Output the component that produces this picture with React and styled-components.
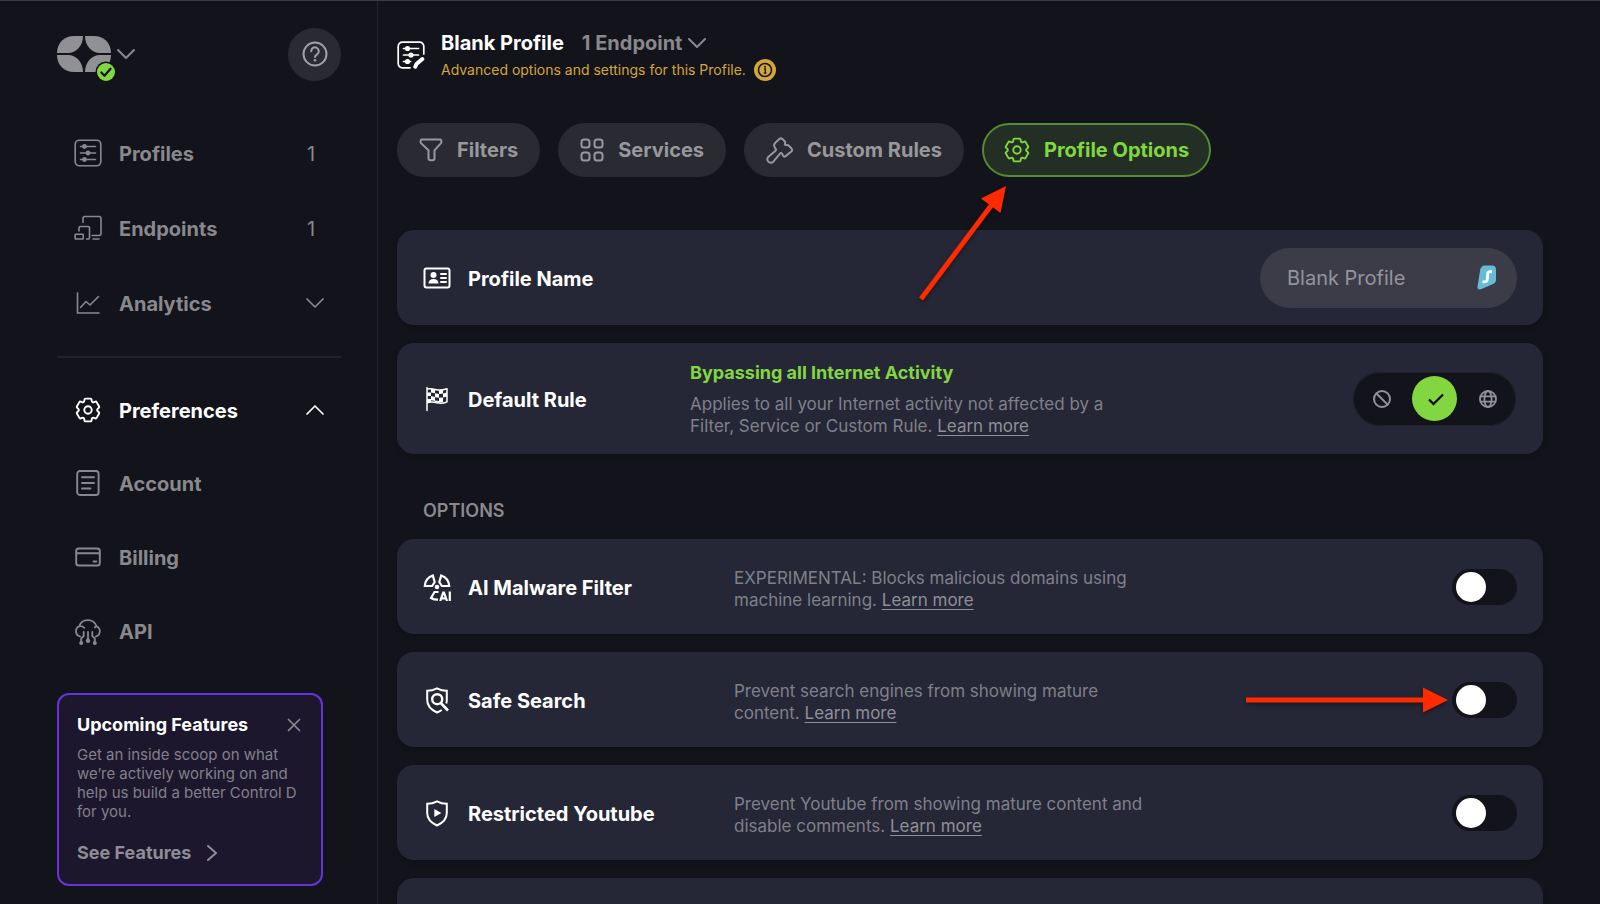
import React from "react";
import styled, { createGlobalStyle, css } from "styled-components";

const color = {
  page: "#13131b",
  card: "#262736",
  pill: "#2a2a32",
  field: "#3c3c49",
  line: "#22222b",
  muted: "#89898d",
  soft: "#7f8089",
  green: "#82d740",
  gold: "#d3a63b",
  purple: "#6434dc",
  arrow: "#ff2b00",
};

const GlobalStyle = createGlobalStyle`
  *, *::before, *::after { box-sizing: border-box; }
  body {
    margin: 0;
    background: ${color.page};
    color: #fff;
    font-family: Inter, "Open Sans", "Liberation Sans", sans-serif;
  }
  button { font: inherit; color: inherit; background: none; border: 0; padding: 0; cursor: pointer; }
  h1, h2, p, ul { margin: 0; padding: 0; }
  svg { display: block; flex: none; }
`;

/* ---------- icons ---------- */

const Svg = ({ w = 28, h = w, sw = 2, children, ...rest }) => (
  <svg
    width={w}
    height={h}
    viewBox={`0 0 ${w} ${h}`}
    fill="none"
    stroke="currentColor"
    strokeWidth={sw}
    strokeLinecap="round"
    strokeLinejoin="round"
    aria-hidden="true"
    {...rest}
  >
    {children}
  </svg>
);

const Sliders = () => (
  <>
    <path d="M6.5 7.5h15M6.5 14h15M6.5 20.5h15" />
    <g fill="currentColor" stroke="none">
      <circle cx="10.5" cy="7.5" r="2.4" />
      <circle cx="14" cy="14" r="2.4" />
      <circle cx="10.5" cy="20.5" r="2.4" />
    </g>
  </>
);

const ProfilesIcon = () => (
  <Svg sw={1.6}>
    <rect x="1.2" y="1.2" width="25.6" height="25.6" rx="4.2" />
    <Sliders />
  </Svg>
);

const ProfileEditIcon = () => (
  <Svg sw={1.7}>
    <path d="M13 26.8H5.4a4.2 4.2 0 0 1-4.2-4.2V5.4a4.2 4.2 0 0 1 4.2-4.2h17.2a4.2 4.2 0 0 1 4.2 4.2V13" />
    <path d="M6.5 7.5h15M6.5 14h15M6.5 20.5h7" />
    <g fill="currentColor" stroke="none">
      <circle cx="10.5" cy="7.5" r="2.6" />
      <circle cx="14" cy="14" r="2.6" />
      <circle cx="10.5" cy="20.5" r="2.6" />
    </g>
    <path d="M18.3 25.7l1.2-2.7 5.8-5" strokeWidth="4" />
  </Svg>
);

const EndpointsIcon = () => (
  <Svg sw={1.6}>
    <path d="M9 8.5V4.5a2 2 0 0 1 2-2h14a2 2 0 0 1 2 2v15a2 2 0 0 1-2 2h-7M19 25h6" />
    <path d="M5 17v-3a1.5 1.5 0 0 1 1.5-1.5h7.5a1.5 1.5 0 0 1 1.5 1.5v9.5a1.5 1.5 0 0 1-1.5 1.5h-1.5" />
    <rect x="1.2" y="20.2" width="8" height="4.8" rx=".6" />
  </Svg>
);

const AnalyticsIcon = () => (
  <Svg sw={1.6}>
    <path d="M3.5 4v20H25M6.5 18.5l5.5-6 4 3.5 8.5-8.5" strokeLinejoin="miter" />
  </Svg>
);

/* Outline of a six-toothed wheel centred on (13, 13), with softened corners */
const gearPath = (() => {
  const points = [];
  for (let i = 0; i < 6; i += 1) {
    const a = ((i * 60 - 90) * Math.PI) / 180;
    [[8.3, -3.9], [11.4, -3.4], [11.4, 3.4], [8.3, 3.9]].forEach(([r, t]) => {
      points.push([13 + r * Math.cos(a) - t * Math.sin(a), 13 + r * Math.sin(a) + t * Math.cos(a)]);
    });
  }
  const toward = (p, q, d) => {
    const len = Math.hypot(q[0] - p[0], q[1] - p[1]);
    const k = Math.min(d / len, 0.5);
    return `${(p[0] + (q[0] - p[0]) * k).toFixed(2)} ${(p[1] + (q[1] - p[1]) * k).toFixed(2)}`;
  };
  const n = points.length;
  const parts = points.map((p, i) => {
    const before = toward(p, points[(i + n - 1) % n], 0.9);
    const after = toward(p, points[(i + 1) % n], 0.9);
    return `${i ? "L" : "M"}${before}Q${p[0].toFixed(2)} ${p[1].toFixed(2)} ${after}`;
  });
  return `${parts.join("")}Z`;
})();

const GearIcon = () => (
  <Svg w={26} sw={1.9}>
    <path d={gearPath} />
    <circle cx="13" cy="13" r="3.7" />
  </Svg>
);

const AccountIcon = () => (
  <Svg sw={1.9}>
    <rect x="3.2" y="2" width="21.4" height="24" rx="2.8" />
    <path d="M8 8.3h12M8 14h12M8 19.5h8.5" />
  </Svg>
);

const BillingIcon = () => (
  <Svg sw={1.9}>
    <rect x="2.2" y="5.5" width="23.6" height="17" rx="2.6" />
    <path d="M2.5 10.3h23M19.5 18.5h2.8" />
  </Svg>
);

const ApiIcon = () => (
  <Svg sw={1.8}>
    <path d="M6 19.5A5.5 5.5 0 0 1 5.2 9.2 9.2 9.2 0 0 1 22.5 9.2a5.5 5.5 0 0 1-.6 10.3M5 9.3c2-.5 3.8 0 5.3 1.5M22.7 9.5l-2 .8" />
    <path d="M14 15v8M9.7 15v4l-2.5 2.3v3.5M18.3 15v4l2.5 2.3v3.5" />
    <g fill="currentColor" stroke="none">
      <circle cx="14" cy="23.8" r="2.2" />
      <circle cx="7.2" cy="26" r="2" />
      <circle cx="20.8" cy="26" r="2" />
    </g>
  </Svg>
);

const HelpIcon = () => (
  <Svg w={26} sw={2}>
    <circle cx="13" cy="13" r="11.5" />
    <path d="M9.2 10.2a3.8 3.8 0 1 1 5.9 3.1c-1.3.8-2.1 1.4-2.1 2.8" />
    <circle cx="13" cy="19.3" r="1.3" fill="currentColor" stroke="none" />
  </Svg>
);

const Chevron = ({ up, w = 18, sw = 1.7 }) => (
  <Svg w={w} h={12} sw={sw}>
    <path d={up ? `M1 10L${w / 2} 2L${w - 1} 10` : `M1 2L${w / 2} 10L${w - 1} 2`} />
  </Svg>
);

const FilterIcon = () => (
  <Svg w={24} sw={2}>
    <path d="M2.8 1.5h18.4c1.3 0 1.6 2.7.8 3.6l-6.5 7.2v8a2 2 0 0 1-2 2h-2a2 2 0 0 1-2-2v-8L2 5.1c-.8-.9-.5-3.6.8-3.6z" />
  </Svg>
);

const ServicesIcon = () => (
  <Svg w={24} sw={2}>
    <rect x="1.5" y="1.5" width="8" height="8" rx="2.5" />
    <rect x="14.5" y="1.5" width="8" height="8" rx="2.5" />
    <rect x="1.5" y="14.5" width="8" height="8" rx="2.5" />
    <rect x="14.5" y="14.5" width="8" height="8" rx="2.5" />
  </Svg>
);

const RulesIcon = () => (
  <Svg w={27} sw={1.9} viewBox="1 0 26 26">
    <path d="M10 5.5l3.8-3.5a2.2 2.2 0 0 1 3 0l2.200 2.100a2 2 0 0 1 .3 2.200c-.4 1 .4 1.800 1.300 1.500a2.500 2.500 0 0 1 2.500.6l2.400 2.700a2 2 0 0 1-.1 2.900l-5.500 4.400c-1 .8-2.200.4-2.700-.7l-.6-1.400c-.5-1-1.500-1.100-2.200-.2L8.300 23.400a3.300 3.300 0 0 1-5.100.3 3.300 3.300 0 0 1 .5-5l6.200-5.200c.9-.8 1-1.400.3-2.300l-.5-.7c-1.200-1.700-1.200-3.500.3-5z" />
  </Svg>
);

const IdCardIcon = () => (
  <Svg w={28} sw={2}>
    <rect x="1.5" y="4.5" width="25" height="19" rx="2" />
    <path d="M18 10h5M18 14h5M18 18h5" />
    <g fill="currentColor" stroke="none">
      <circle cx="10.5" cy="11" r="3" />
      <path d="M5.5 19.5c0-3 2-4.5 5-4.5s5 1.5 5 4.5z" />
    </g>
  </Svg>
);

const FlagIcon = () => (
  <Svg sw={1.5}>
    <path d="M4 2.5v23M4 4c4-1 7 .2 10 .8s6 .2 10-1v13c-4 2-7 1.7-10 1s-6-1.3-10 0" />
    <path
      d="M8 3.7l4 .7v3.8l-4-.7zM16 5l4-.4v3.9l-4 .4zM4 7.5h4v3.6H4zM12 8.2l4 .7v3.9l-4-.6zM20 8.5l4-1v4l-4 1zM8 11.1l4 .9v4l-4-.7zM16 12.8l4-.4v4.5l-4 .8zM12 15.5l4 .6v2l-4-.4zM4 14h4v3.5H4z"
      fill="currentColor"
      stroke="none"
    />
  </Svg>
);

const MalwareIcon = () => (
  <Svg sw={2.2} strokeLinejoin="miter" strokeLinecap="butt">
    <path d="M9.8 2.5A12 12 0 0 0 1.8 13h7.3l2.6-4z" />
    <path d="M18.2 2.5a12 12 0 0 1 8 10.5h-7.3l-2.6-4z" />
    <path d="M15.5 19h-4L8 25c2 1.2 4 1.7 7 1.7" />
    <circle cx="14" cy="14" r="2.3" fill="currentColor" stroke="none" />
    <path d="M17.2 28l3-8.3h.8l3 8.3M18.4 25.4h4.4M26.8 18.6V28" />
  </Svg>
);

const SafeSearchIcon = () => (
  <Svg sw={2} strokeLinejoin="miter" strokeLinecap="butt">
    <path d="M18.8 24c-1.5 1-3 1.8-4.8 2.5C7.5 23.5 4.2 20 4.2 14V4.8C8 4.8 11 4 14 2.4c3 1.6 6 2.4 9.8 2.4V14c0 1.2-.1 2.5-.5 3.5" />
    <circle cx="14.2" cy="13.2" r="5" strokeWidth="2.4" />
    <path d="M17.8 17l7.2 7.5" strokeWidth="2.6" />
  </Svg>
);

const RestrictedIcon = () => (
  <Svg sw={2} strokeLinejoin="miter">
    <path d="M14 26.5C7.5 23.5 4.2 20 4.2 14V4.8C8 4.8 11 4 14 2.4c3 1.6 6 2.4 9.8 2.4V14c0 6-3.3 9.5-9.8 12.5z" />
    <path d="M11.3 10v8l7-4z" fill="currentColor" stroke="none" />
  </Svg>
);

const BanIcon = () => (
  <Svg w={20} sw={2}>
    <circle cx="10" cy="10" r="8" />
    <path d="M4.5 4.5l11 11" />
  </Svg>
);

const CheckIcon = () => (
  <Svg w={20} sw={2.2} strokeLinecap="butt" strokeLinejoin="miter">
    <path d="M4 10.5l4.5 4.5L18 5.5" />
  </Svg>
);

const GlobeIcon = () => (
  <Svg w={20} sw={1.8}>
    <circle cx="10" cy="10" r="8" />
    <ellipse cx="10" cy="10" rx="3.6" ry="8" />
    <path d="M2.5 7.3h15M2.5 12.7h15" />
  </Svg>
);

const InfoIcon = () => (
  <svg width="22" height="22" viewBox="0 0 22 22" aria-hidden="true">
    <circle cx="11" cy="11" r="11" fill={color.gold} />
    <circle cx="11" cy="11" r="6.5" fill="none" stroke={color.page} strokeWidth="1.5" />
    <circle cx="11" cy="7.8" r="1" fill={color.page} />
    <path d="M10 10h1.3v4M9.7 14.2h2.8" stroke={color.page} strokeWidth="1.3" fill="none" />
  </svg>
);

const LogoIcon = () => (
  <svg width="60" height="56" viewBox="0 -10 60 56" aria-hidden="true">
    <g fill="#919195">
      <path d="M26 0H17C7 0 0 7 0 17H11C19 17 26 10 26 0Z" />
      <path d="M28 0h9c10 0 17 7 17 17H43C35 17 28 10 28 0Z" />
      <path d="M26 36H17C7 36 0 29 0 19H11C19 19 26 26 26 36Z" />
      <path d="M28 36h9c10 0 17-7 17-17H43C35 19 28 26 28 36Z" />
    </g>
    <circle cx="49" cy="36" r="10.5" fill={color.page} />
    <circle cx="49" cy="36" r="9" fill={color.green} />
    <path d="M44.3 36.5l3.2 3.2 6-7" fill="none" stroke={color.page} strokeWidth="2.2" strokeLinecap="round" strokeLinejoin="round" />
  </svg>
);

const SharkIcon = () => (
  <svg width="20" height="25" viewBox="0 0 20 25" aria-hidden="true">
    <path d="M8.5.5H15a4 4 0 0 1 4 4v10c0 2-1 3.5-3 4.5L4.5 24C2 25 .2 24 .5 21.5L3 6C3.5 2.5 5 .5 8.5.5z" fill="#66bcd5" />
    <path d="M15 6.8c-3.5-.7-4.5.6-4.500 3.200v3c0 2.800-1.200 4.400-5 3.600" fill="none" stroke="#fff" strokeWidth="2.8" />
  </svg>
);

const CloseIcon = () => (
  <Svg w={14} sw={1.7}>
    <path d="M1.5 1.5l11 11M12.5 1.5l-11 11" />
  </Svg>
);

/* ---------- layout ---------- */

const Shell = styled.div`
  display: grid;
  grid-template-columns: 378px minmax(0, 1fr);
  height: 100vh;
  overflow: hidden;
  border-top: 1px solid #3b3d3c;
`;

const Sidebar = styled.aside`
  padding: 0 36px 0 57px;
  border-right: 1px solid ${color.line};
`;

const Brand = styled.div`
  display: flex;
  align-items: center;
  justify-content: space-between;
  height: 114px;
  padding-bottom: 8px;
`;

const BrandButton = styled.button`
  display: flex;
  align-items: center;
  color: ${color.muted};
`;

const HelpButton = styled.button`
  display: grid;
  place-items: center;
  width: 53px;
  height: 53px;
  border-radius: 50%;
  background: ${color.pill};
  color: #a1a1a4;
`;

const NavList = styled.ul`
  list-style: none;
`;

const NavLink = styled.a`
  display: grid;
  grid-template-columns: 28px 1fr 26px;
  column-gap: 17px;
  align-items: center;
  height: ${(p) => p.$height || 75}px;
  padding: 0 13px 0 17px;
  color: ${(p) => (p.$active ? "#fff" : color.muted)};
  font-size: 20px;
  font-weight: 700;
  text-decoration: none;

  svg { justify-self: center; }
`;

const Label = styled.span`
  padding-top: 2px;
`;

const Count = styled.span`
  padding: 2px 8px 0 0;
  text-align: center;
  font-weight: 400;
`;

const Divider = styled.hr`
  height: 2px;
  margin: 16px 0;
  border: 0;
  background: ${color.line};
`;

const Promo = styled.section`
  margin: 25px 18px 0 0;
  padding: 18px 17px 19px 18px;
  border: 2px solid ${color.purple};
  border-radius: 12px;
  background: #1c172d;
`;

const PromoHead = styled.div`
  display: flex;
  align-items: center;
  justify-content: space-between;
  padding-right: 3px;
  color: ${color.muted};
`;

const PromoTitle = styled.h2`
  color: #fff;
  font-size: 18px;
  line-height: 24px;
  font-weight: 700;
`;

const PromoText = styled.p`
  margin-top: 8px;
  color: #82808b;
  font-size: 15px;
  line-height: 19px;
`;

const PromoLink = styled.a`
  display: flex;
  align-items: center;
  gap: 13px;
  margin-top: 20px;
  color: #8e8c96;
  font-size: 18px;
  line-height: 24px;
  font-weight: 700;
  text-decoration: none;

  svg { transform: rotate(-90deg); }
`;

const Main = styled.main`
  padding: 27px 57px 0 19px;
  overflow-y: auto;
  scrollbar-width: none;
`;

const PageHead = styled.header`
  display: flex;
  align-items: center;
  gap: 16px;
`;

const TitleLine = styled.div`
  display: flex;
  align-items: center;
  gap: 18px;
  line-height: 30px;
`;

const Title = styled.h1`
  font-size: 20px;
  font-weight: 700;
`;

const EndpointButton = styled.button`
  display: flex;
  align-items: center;
  gap: 6px;
  color: ${color.muted};
  font-size: 20px;
  font-weight: 700;
`;

const Subtitle = styled.p`
  display: flex;
  align-items: center;
  gap: 8px;
  color: ${color.gold};
  font-size: 14px;
  line-height: 24px;
`;

const Tabs = styled.nav`
  display: flex;
  gap: 18px;
  margin-top: 41px;
`;

const Tab = styled.button`
  position: relative;
  display: flex;
  align-items: center;
  gap: 14px;
  height: 54px;
  padding: 0 20px;
  border: 2px solid ${color.pill};
  border-radius: 27px;
  background: ${color.pill};
  color: #98989c;
  font-size: 20px;
  font-weight: 700;
  white-space: nowrap;

  ${(p) =>
    p.$active &&
    css`
      border-color: #558b34;
      background: #232f24;
      color: ${color.green};
    `}
`;

const CardList = styled.div`
  display: grid;
  gap: 18px;
  margin-top: ${(p) => p.$top || 0}px;
`;

const Card = styled.section`
  display: grid;
  grid-template-columns: 28px ${(p) => p.$label || 249}px minmax(0, 425px) 1fr;
  column-gap: 17px;
  align-items: center;
  min-height: ${(p) => p.$height || 95}px;
  padding: 0 26px;
  border-radius: 17px;
  background: ${color.card};
  box-shadow: 0 2px 4px rgba(0, 0, 0, 0.2);
`;

const CardTitle = styled.h2`
  padding-top: 2px;
  font-size: 20px;
  line-height: 26px;
  font-weight: 700;
  white-space: nowrap;
`;

const CardEnd = styled.div`
  grid-column: 4;
  justify-self: end;
  position: relative;
`;

const RuleInfo = styled.div`
  display: grid;
  gap: 2px;
`;

const Status = styled.p`
  color: ${color.green};
  font-size: 18px;
  line-height: 26px;
  font-weight: 700;
`;

const Description = styled.p`
  padding-top: 5px;
  color: ${color.soft};
  font-size: 17px;
  line-height: 22px;

  a { color: #8e8f97; text-underline-offset: 3px; }
`;

const NameField = styled.div`
  display: flex;
  align-items: center;
  width: 257px;
  height: 60px;
  padding: 0 20px 0 27px;
  border-radius: 30px;
  background: ${color.field};
`;

const NameInput = styled.input`
  flex: 1;
  min-width: 0;
  padding: 0;
  border: 0;
  outline: 0;
  background: none;
  color: #94949b;
  font: inherit;
  font-size: 20px;
`;

const RuleSwitch = styled.fieldset`
  display: flex;
  align-items: center;
  justify-content: space-between;
  width: 163px;
  height: 54px;
  margin: 0 1px 0 0;
  padding: 0 5px;
  border: 1px solid #202028;
  border-radius: 27px;
  background: ${color.page};
`;

const RuleOption = styled.label`
  position: relative;
  display: grid;
  place-items: center;
  width: 45px;
  height: 45px;
  border-radius: 50%;
  color: #929296;
  cursor: pointer;

  &:has(input:checked) { background: ${color.green}; color: #000; }
`;

const RuleInput = styled.input`
  position: absolute;
  inset: 0;
  margin: 0;
  opacity: 0;
`;

const Toggle = styled.input`
  appearance: none;
  display: block;
  width: 65px;
  height: 36px;
  margin: 0;
  padding: 3px 4px;
  border-radius: 18px;
  background: ${color.page};
  cursor: pointer;

  &::before {
    content: "";
    display: block;
    width: 30px;
    height: 30px;
    border-radius: 50%;
    background: #fff;
  }
  &:checked { background: ${color.green}; }
  &:checked::before { margin-left: auto; }
`;

const SectionLabel = styled.h2`
  padding: 46px 26px 17px;
  color: ${color.muted};
  font-size: 18px;
  line-height: 22px;
  font-weight: 600;
`;

/* Pointers lie over the controls they call out */
const TabPointer = styled.svg`
  position: absolute;
  z-index: 1;
  top: 59px;
  right: 200px;
  filter: drop-shadow(0 2px 2px rgba(0, 0, 0, 0.4));
  pointer-events: none;
`;

const TogglePointer = styled.svg`
  position: absolute;
  top: 5px;
  right: 69px;
  filter: drop-shadow(0 2px 2px rgba(0, 0, 0, 0.4));
  pointer-events: none;
`;

const mainNav = [
  { label: "Profiles", icon: <ProfilesIcon />, count: 1 },
  { label: "Endpoints", icon: <EndpointsIcon />, count: 1 },
  { label: "Analytics", icon: <AnalyticsIcon /> },
];

const prefNav = [
  { label: "Account", icon: <AccountIcon /> },
  { label: "Billing", icon: <BillingIcon /> },
  { label: "API", icon: <ApiIcon /> },
];

const tabs = [
  { label: "Filters", icon: <FilterIcon /> },
  { label: "Services", icon: <ServicesIcon /> },
  { label: "Custom Rules", icon: <RulesIcon /> },
  { label: "Profile Options", icon: <GearIcon />, active: true },
];

const options = [
  {
    id: "malware",
    label: "AI Malware Filter",
    icon: <MalwareIcon />,
    text: "EXPERIMENTAL: Blocks malicious domains using machine learning.",
  },
  {
    id: "safe-search",
    label: "Safe Search",
    icon: <SafeSearchIcon />,
    text: "Prevent search engines from showing mature content.",
    pointer: true,
  },
  {
    id: "youtube",
    label: "Restricted Youtube",
    icon: <RestrictedIcon />,
    text: "Prevent Youtube from showing mature content and disable comments.",
  },
];

export default function App() {
  return (
    <>
      <GlobalStyle />
      <Shell>
        <Sidebar>
          <Brand>
            <BrandButton aria-label="Switch organization">
              <LogoIcon />
              <Chevron sw={2} />
            </BrandButton>
            <HelpButton aria-label="Help">
              <HelpIcon />
            </HelpButton>
          </Brand>
          <NavList>
            {mainNav.map((item) => (
              <li key={item.label}>
                <NavLink href="#">
                  {item.icon}
                  <Label>{item.label}</Label>
                  {item.count ? <Count>{item.count}</Count> : <Chevron />}
                </NavLink>
              </li>
            ))}
          </NavList>
          <Divider />
          <NavList>
            <li>
              <NavLink href="#" $active $height={72}>
                <GearIcon />
                <Label>Preferences</Label>
                <Chevron up />
              </NavLink>
            </li>
            {prefNav.map((item) => (
              <li key={item.label}>
                <NavLink href="#" $height={74}>
                  {item.icon}
                  <Label>{item.label}</Label>
                </NavLink>
              </li>
            ))}
          </NavList>
          <Promo>
            <PromoHead>
              <PromoTitle>Upcoming Features</PromoTitle>
              <button aria-label="Dismiss">
                <CloseIcon />
              </button>
            </PromoHead>
            <PromoText>
              Get an inside scoop on what we’re actively working on and help us build a better Control D for you.
            </PromoText>
            <PromoLink href="#">
              See Features
              <Chevron w={16} sw={2} />
            </PromoLink>
          </Promo>
        </Sidebar>

        <Main>
          <PageHead>
            <ProfileEditIcon />
            <div>
              <TitleLine>
                <Title>Blank Profile</Title>
                <EndpointButton>
                  1 Endpoint
                  <Chevron sw={2} />
                </EndpointButton>
              </TitleLine>
              <Subtitle>
                Advanced options and settings for this Profile.
                <InfoIcon />
              </Subtitle>
            </div>
          </PageHead>

          <Tabs>
            {tabs.map((tab) => (
              <Tab key={tab.label} $active={tab.active}>
                {tab.icon}
                {tab.label}
                {tab.active && (
                  <TabPointer width="90" height="118" viewBox="0 0 90 118" aria-hidden="true">
                    <path d="M2 115L72.5 21" stroke={color.arrow} strokeWidth="5" />
                    <path d="M87 2L62 14.5L81.5 29Z" fill={color.arrow} />
                  </TabPointer>
                )}
              </Tab>
            ))}
          </Tabs>

          <CardList $top={53}>
            <Card>
              <IdCardIcon />
              <CardTitle as="label" htmlFor="profile-name">Profile Name</CardTitle>
              <CardEnd>
                <NameField>
                  <NameInput id="profile-name" defaultValue="Blank Profile" />
                  <SharkIcon />
                </NameField>
              </CardEnd>
            </Card>

            <Card $height={111} $label={205}>
              <FlagIcon />
              <CardTitle>Default Rule</CardTitle>
              <RuleInfo>
                <Status>Bypassing all Internet Activity</Status>
                <Description>
                  Applies to all your Internet activity not affected by a Filter, Service or Custom Rule.{" "}
                  <a href="#">Learn more</a>
                </Description>
              </RuleInfo>
              <CardEnd>
                <RuleSwitch aria-label="Default rule">
                  <RuleOption>
                    <RuleInput type="radio" name="rule" aria-label="Block" />
                    <BanIcon />
                  </RuleOption>
                  <RuleOption>
                    <RuleInput type="radio" name="rule" aria-label="Bypass" defaultChecked />
                    <CheckIcon />
                  </RuleOption>
                  <RuleOption>
                    <RuleInput type="radio" name="rule" aria-label="Redirect" />
                    <GlobeIcon />
                  </RuleOption>
                </RuleSwitch>
              </CardEnd>
            </Card>
          </CardList>

          <SectionLabel>OPTIONS</SectionLabel>

          <CardList>
            {options.map((option) => (
              <Card key={option.id}>
                {option.icon}
                <CardTitle as="label" htmlFor={option.id}>{option.label}</CardTitle>
                <Description>
                  {option.text} <a href="#">Learn more</a>
                </Description>
                <CardEnd>
                  <Toggle type="checkbox" id={option.id} />
                  {option.pointer && (
                    <TogglePointer width="202" height="26" viewBox="0 0 202 26" aria-hidden="true">
                      <path d="M0 13H178" stroke={color.arrow} strokeWidth="5" />
                      <path d="M177 0.5L202 13L177 25.5Z" fill={color.arrow} />
                    </TogglePointer>
                  )}
                </CardEnd>
              </Card>
            ))}
            <Card />
          </CardList>
        </Main>
      </Shell>
    </>
  );
}
